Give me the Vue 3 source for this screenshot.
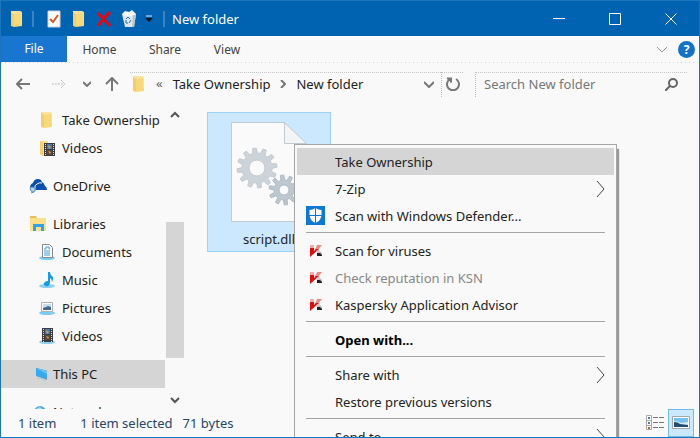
<script setup>
import { ref } from 'vue';

const search = ref('');

const tabs = ['Home', 'Share', 'View'];

const groups = [
  [
    { icon: 'folder', label: 'Take Ownership', child: true },
    { icon: 'folder-video', label: 'Videos', child: true },
  ],
  [{ icon: 'onedrive', label: 'OneDrive' }],
  [
    { icon: 'libraries', label: 'Libraries' },
    { icon: 'documents', label: 'Documents', child: true },
    { icon: 'music', label: 'Music', child: true },
    { icon: 'pictures', label: 'Pictures', child: true },
    { icon: 'film', label: 'Videos', child: true },
  ],
  [{ icon: 'pc', label: 'This PC', active: true }],
  [{ icon: 'network', label: 'Network' }],
];

const menu = [
  [
    { label: 'Take Ownership', active: true },
    { label: '7-Zip', sub: true },
    { label: 'Scan with Windows Defender...', icon: 'defender' },
  ],
  [
    { label: 'Scan for viruses', icon: 'kaspersky' },
    { label: 'Check reputation in KSN', icon: 'kaspersky', disabled: true },
    { label: 'Kaspersky Application Advisor', icon: 'kaspersky' },
  ],
  [{ label: 'Open with...', bold: true }],
  [{ label: 'Share with', sub: true }, { label: 'Restore previous versions' }],
  [{ label: 'Send to', sub: true }],
];

// outline of a gear with a round hole in the middle
const gear = (cx, cy, outer, inner, hole, teeth) => {
  const step = (Math.PI * 2) / teeth;
  const points = [];
  for (let i = 0; i < teeth; i++) {
    const offsets = [[-0.3, inner], [-0.17, outer], [0.17, outer], [0.3, inner]];
    for (const [o, r] of offsets) {
      const a = (i + o) * step - 1.7;
      points.push(`${(cx + Math.cos(a) * r).toFixed(1)} ${(cy + Math.sin(a) * r).toFixed(1)}`);
    }
  }
  return `M${points.join('L')}Z M${cx - hole} ${cy}a${hole} ${hole} 0 1 0 ${hole * 2} 0a${hole} ${hole} 0 1 0 ${-hole * 2} 0Z`;
};
const bigGear = gear(26, 46, 20, 15, 8, 12);
const smallGear = gear(53, 68, 15, 10, 5, 10);
</script>

<template>
  <svg class="sprite" aria-hidden="true">
    <symbol id="folder" viewBox="0 0 18 18">
      <path d="M3 1h9l2 1v14H3z" fill="#fbe39a" />
      <path d="M3 2l3 2v13l-3-1z" fill="#f3cf6b" />
      <path d="M6 4l7-1v9l1 1v3l-8 1z" fill="#f8d879" />
    </symbol>
    <symbol id="folder-video" viewBox="0 0 18 18">
      <path d="M2 2h8v14l-5 1-3-2z" fill="#f9dd88" />
      <path d="M2 2l3 2v13l-3-2z" fill="#f3cf6b" />
      <path d="M6 4h11v13H6z" fill="#3b3b40" />
      <path d="M9 5h5v5H9z" fill="#377fc4" />
      <path d="M9 11h5v5H9z" fill="#5a4a35" />
      <path d="M10 6l3 2-2 2zM10 12l3 1-1 2z" fill="#e79a35" />
      <path d="M7.500 5v12M15.500 5v12" stroke="#ddd" stroke-dasharray="1 1" />
    </symbol>
    <symbol id="onedrive" viewBox="0 0 18 18">
      <path d="M1 11q0-4 3-5 1-4 5-4 3 0 4 3 2 1 3 4 2 1 2 4H7q-2-2-4-1z" fill="#0a4fb0" />
      <path d="M6 12q-1-4 2-5 3-2 5-1" fill="none" stroke="#f9f9f9" />
      <path d="M1 11l2-1 3 1v3l-2 1-2-1zM2 16l3-1" fill="#b9d3ee" stroke="#5a90c8" />
    </symbol>
    <symbol id="libraries" viewBox="0 0 18 18">
      <path d="M1 1h6l1 2h9v13H1z" fill="#fbe08c" />
      <path d="M1 1h6l1 2H1z" fill="#e9bf57" />
      <path d="M4 9h11v7h-3v-4H7v4H4z" fill="#2fa3e6" />
    </symbol>
    <symbol id="documents" viewBox="0 0 18 18">
      <ellipse cx="9" cy="15" rx="8" ry="2" fill="#7ccbf0" />
      <path d="M4.500 1.500h7l3 3v10h-10z" fill="#fff" stroke="#888" />
      <path d="M6 6h2V4h3v2h1M6 8h6M6 10h6M6 12h6" fill="none" stroke="#3c9ae0" />
    </symbol>
    <symbol id="music" viewBox="0 0 18 18">
      <ellipse cx="9" cy="15" rx="8" ry="2" fill="#8ad0f0" />
      <path d="M10 1h2q0 3 3 5 1 2-1 5 0-3-2-4v5q-1 4-4 3-3-1-2-3 1-2 4-2z" fill="#149be9" />
    </symbol>
    <symbol id="pictures" viewBox="0 0 18 18">
      <ellipse cx="9" cy="14" rx="8" ry="2" fill="#7ccbf0" />
      <path d="M3.500 3.500h11v9h-11z" fill="#fff" stroke="#aab3ba" />
      <path d="M5 5h8v6H5z" fill="#c5dff0" />
      <path d="M5 9l3-1 2-1 3 1v3H5z" fill="#446b8c" />
    </symbol>
    <symbol id="film" viewBox="0 0 18 18">
      <ellipse cx="9" cy="15" rx="8" ry="2" fill="#8ad0f0" />
      <path d="M4 1h11v14H4z" fill="#3b3b40" />
      <path d="M7 2h5v5H7z" fill="#377fc4" />
      <path d="M7 8h5v5H7z" fill="#5a4a35" />
      <path d="M8 3l3 2-2 2zM8 9l3 1-1 2z" fill="#e79a35" />
      <path d="M5.500 2v13M13.500 2v13" stroke="#ddd" stroke-dasharray="1 1" />
    </symbol>
    <symbol id="pc" viewBox="0 0 18 18">
      <path d="M7 3l12 3v9L8 11z" fill="#6d7f8d" />
      <path d="M7 3l11 3v8L7 11z" fill="#35aaf0" />
      <path d="M7 3l11 3v3z" fill="#6cc6f8" />
      <path d="M8 14l4-1 4 3" fill="none" stroke="#9ecbe6" />
    </symbol>
    <symbol id="network" viewBox="0 0 18 18">
      <circle cx="11" cy="9" r="6" fill="#5aa6dc" />
      <path d="M7 6l4-2 3 3-4 2z" fill="#a8dbf5" />
      <path d="M1 8h6v6H1z" fill="#3f87c4" />
    </symbol>
    <symbol id="defender" viewBox="0 0 19 19">
      <path d="M0 0h19v19H0z" fill="#0f78d4" />
      <path d="M9.500 2q3 2 6 2v5q0 5-6 8-6-3-6-8V4q3 0 6-2z" fill="#fff" />
      <path d="M9.500 2v15M3 9.500h13" stroke="#0f78d4" />
    </symbol>
    <symbol id="kaspersky" viewBox="0 0 19 19">
      <path d="M4 4h4v5H4z" fill="#f4aaa6" />
      <path d="M11 4h5l-4 5H9z" fill="#f08984" />
      <path d="M4 7h4v3l2-2h3L4 16z" fill="#e30b0b" />
      <path d="M10 10l3-1 3 3v3h-3z" fill="#c4c4c4" />
      <path d="M11 12h3l2 2v1h-5z" fill="#222" />
    </symbol>
  </svg>

  <div class="window">
    <header class="titlebar">
      <svg class="icon"><use href="#folder" /></svg>
      <span class="divider"></span>
      <button class="quick" aria-label="Properties">
        <svg viewBox="0 0 18 18">
          <path d="M3 1h12v16H3z" fill="#fdfdfd" />
          <path d="M3 1h12v16H3z" fill="none" stroke="#c9d2da" />
          <path d="M5 9l3 3 5-7" fill="none" stroke="#e8501c" stroke-width="2" />
        </svg>
      </button>
      <button class="quick" aria-label="New folder"><svg><use href="#folder" /></svg></button>
      <button class="quick" aria-label="Delete">
        <svg viewBox="0 0 18 18">
          <path d="M3 3l12 13M15 2Q8 8 3 16" fill="none" stroke="#e30613" stroke-width="3" />
        </svg>
      </button>
      <button class="quick" aria-label="Recycle Bin">
        <svg viewBox="0 0 18 18">
          <path d="M2 4h14l-2 13H5z" fill="#dfe7ec" />
          <path d="M2 4l3-3 4 1 3-2 4 4-4 2H5z" fill="#f7f9fa" />
          <path d="M13 5h3l-2 12h-2z" fill="#b8c5ce" />
          <path d="M6 9l2-2 2 2M6 10v3h2M9 13l2-3" fill="none" stroke="#1878c8" />
        </svg>
      </button>
      <button class="customize" aria-label="Customize Quick Access Toolbar">
        <svg viewBox="0 0 8 8"><path d="M1 1h6" stroke="#dde8f2" /><path d="M0 3h8L4 7z" fill="#0b1620" /></svg>
      </button>
      <span class="divider"></span>
      <h1>New folder</h1>
      <div class="controls">
        <button aria-label="Minimize"><svg viewBox="0 0 12 12"><path d="M0 5.500h12" /></svg></button>
        <button aria-label="Maximize"><svg viewBox="0 0 12 12"><path d="M.5.500h11v11H.5z" /></svg></button>
        <button aria-label="Close"><svg viewBox="0 0 12 12"><path d="M.5.500l11 11M11.500.500l-11 11" /></svg></button>
      </div>
    </header>

    <nav class="tabs">
      <button class="file">File</button>
      <button v-for="tab in tabs" :key="tab" class="tab">{{ tab }}</button>
      <button class="expand" aria-label="Expand the Ribbon">
        <svg viewBox="0 0 12 8"><path d="M1 1l5 5 5-5" /></svg>
      </button>
      <button class="help" aria-label="Help">?</button>
    </nav>

    <div class="toolbar">
      <button class="arrow" aria-label="Back">
        <svg viewBox="0 0 14 14"><path d="M14 7H1M6 2L1 7l5 5" stroke="#777" stroke-width="2" /></svg>
      </button>
      <button class="arrow forward" aria-label="Forward" disabled>
        <svg viewBox="0 0 14 14"><path d="M0 7h12M9 3l4 4-4 4" stroke="#bbb" stroke-dasharray="2 1" /></svg>
      </button>
      <button class="recent" aria-label="Recent locations">
        <svg viewBox="0 0 8 6"><path d="M0 1l4 4 4-4" stroke="#777" stroke-width="2" /></svg>
      </button>
      <button class="arrow" aria-label="Up">
        <svg viewBox="0 0 14 14"><path d="M7 14V1M1 7l6-6 6 6" stroke="#777" stroke-width="2" /></svg>
      </button>
      <div class="address">
        <svg class="icon"><use href="#folder" /></svg>
        <span class="more">«</span>
        <a href="#">Take Ownership</a>
        <svg class="crumb" viewBox="0 0 6 8"><path d="M1 0l4 4-4 4" stroke="#777" stroke-width="2" /></svg>
        <a href="#">New folder</a>
        <button class="history" aria-label="Previous locations">
          <svg viewBox="0 0 10 7"><path d="M0 1l5 5 5-5" stroke="#777" stroke-width="2" /></svg>
        </button>
        <button class="refresh" aria-label="Refresh">
          <svg viewBox="0 0 14 14"><path d="M10 2a6 6 0 1 1-6 0M1 1.500h4v4" stroke="#777" stroke-width="2" /></svg>
        </button>
      </div>
      <label class="search">
        <input v-model="search" type="text" placeholder="Search New folder" aria-label="Search New folder" />
        <svg viewBox="0 0 13 13"><circle cx="8" cy="5" r="4" /><path d="M5 8l-5 5" /></svg>
      </label>
    </div>

    <main class="body">
      <aside class="sidebar">
        <ul class="tree">
          <template v-for="(group, g) in groups" :key="g">
            <li v-for="(item, i) in group" :key="item.label" :class="{ first: i === 0 && g > 0 }">
              <a href="#" :class="{ child: item.child, active: item.active }">
                <svg class="icon"><use :href="'#' + item.icon" /></svg>{{ item.label }}
              </a>
            </li>
          </template>
        </ul>
        <div class="scrollbar">
          <button aria-label="Scroll up"><svg viewBox="0 0 10 8"><path d="M1 6l4-4 4 4" /></svg></button>
          <div class="track"><div class="thumb"></div></div>
          <button aria-label="Scroll down"><svg viewBox="0 0 10 8"><path d="M1 2l4 4 4-4" /></svg></button>
        </div>
      </aside>
      <section class="files">
        <figure class="item">
          <svg viewBox="0 0 76 100">
            <path d="M.5.500h53l22 22v77H.5z" fill="#fafafa" stroke="#c3c9cd" />
            <path d="M53.500.500v21h22z" fill="#f3f4f5" stroke="#c3c9cd" />
            <path :d="bigGear" fill="#cdd4d9" stroke="#c3cad0" fill-rule="evenodd" />
            <path :d="smallGear" fill="#bcc7cf" stroke="#b0bac2" fill-rule="evenodd" />
          </svg>
          <figcaption>script.dll</figcaption>
        </figure>
      </section>
    </main>

    <footer class="status">
      <span>1 item</span>
      <span class="selected">1 item selected</span>
      <span>71 bytes</span>
      <div class="views">
        <button aria-label="Details view">
          <svg viewBox="0 0 18 16">
            <path d="M.5.500h5v14h-5zM.5 5.500h5M.5 10.500h5" fill="#fff" stroke="#aaa" />
            <path d="M2 3h2M2 8h2" stroke="#4a7db0" stroke-width="2" />
            <path d="M2 13h2" stroke="#b5672a" stroke-width="2" />
            <path d="M7 2.500h11M7 7.500h11M7 12.500h11" stroke="#777" stroke-dasharray="5 1" />
          </svg>
        </button>
        <button class="on" aria-label="Large thumbnails view">
          <svg viewBox="0 0 18 16">
            <path d="M.5 1.500h17v12H.5z" fill="#fff" stroke="#a0a8ae" />
            <path d="M2 3h14v9H2z" fill="#79c0f0" />
            <path d="M2 6q4 0 7 2l7-1v3H2z" fill="#d5ecfa" />
            <path d="M2 7q4 0 6 2l8 1v2H2z" fill="#234d70" />
          </svg>
        </button>
      </div>
    </footer>

    <div class="menu" role="menu">
      <div v-for="(group, g) in menu" :key="g" class="section">
        <button
          v-for="item in group"
          :key="item.label"
          role="menuitem"
          :disabled="item.disabled"
          :class="{ active: item.active, bold: item.bold }"
        >
          <span class="slot"><svg v-if="item.icon"><use :href="'#' + item.icon" /></svg></span>
          {{ item.label }}
          <svg v-if="item.sub" class="sub" viewBox="0 0 9 16"><path d="M1 0l7 8-7 8" /></svg>
        </button>
      </div>
    </div>
  </div>
</template>

<style>
body {
  margin: 0;
  overflow: hidden;
}
</style>

<style scoped>
* {
  box-sizing: border-box;
}

.sprite {
  position: absolute;
  width: 0;
  height: 0;
}

.window {
  position: relative;
  display: flex;
  flex-direction: column;
  height: 100vh;
  overflow: hidden;
  border: 1px solid #1c74bb;
  background-color: #f9f9f9;
  color: #222;
  font-family: "Noto Sans", "Open Sans", sans-serif;
  font-size: 13px;
  line-height: 18px;
}

button {
  display: flex;
  align-items: center;
  justify-content: center;
  padding: 0;
  border: 0;
  background: none;
  color: inherit;
  font: inherit;
}

a {
  color: inherit;
  text-decoration: none;
  white-space: nowrap;
}

svg {
  display: block;
  flex: none;
}

.icon {
  width: 18px;
  height: 18px;
}

.titlebar {
  display: flex;
  align-items: center;
  flex: none;
  height: 35px;
  padding-left: 7px;
  background-color: #0063b1;
  color: #fff;
}

.titlebar h1 {
  margin: 0;
  font-size: 13px;
  font-weight: 400;
}

.divider {
  width: 2px;
  height: 16px;
  margin: 0 7px 0 6px;
  background-color: #3f83bd;
}

.quick {
  width: 25px;
  height: 25px;
}

.quick svg {
  width: 18px;
  height: 18px;
}

.customize {
  width: 16px;
  height: 25px;
}

.customize svg {
  width: 8px;
  height: 8px;
}

.controls {
  display: flex;
  margin-left: auto;
}

.controls button {
  width: 56px;
  height: 35px;
}

.controls svg {
  width: 12px;
  height: 12px;
  fill: none;
  stroke: #fff;
}

.tabs {
  display: flex;
  align-items: center;
  flex: none;
  height: 27px;
  padding-right: 4px;
  background: repeating-linear-gradient(90deg, #c3d2de 0 1px, transparent 1px 4px) bottom / 100% 1px no-repeat;
  color: #444;
  font-size: 12px;
}

.file {
  width: 66px;
  height: 26px;
  align-self: flex-start;
  background-color: #1976d0;
  color: #fff;
}

.tab {
  width: 62px;
  height: 26px;
}

.tab:nth-child(2) {
  width: 65px;
}

.tab:nth-child(3) {
  width: 66px;
}

.tab:nth-child(4) {
  width: 58px;
}

.expand {
  width: 22px;
  height: 26px;
  margin: 0 5px 0 auto;
}

.expand svg {
  width: 12px;
  height: 8px;
  fill: none;
  stroke: #999;
}

.help {
  width: 17px;
  height: 17px;
  border-radius: 50%;
  background-color: #1473c8;
  color: #fff;
  font-weight: 700;
}

.toolbar {
  display: flex;
  align-items: center;
  flex: none;
  height: 42px;
  padding: 0 11px 0 15px;
}

.toolbar svg {
  fill: none;
}

.arrow {
  width: 14px;
  height: 24px;
}

.arrow svg {
  width: 14px;
  height: 14px;
}

.forward {
  margin-left: 22px;
}

.recent {
  width: 8px;
  height: 24px;
  margin: 0 14px 0 17px;
}

.recent svg {
  width: 8px;
  height: 6px;
}

.address,
.search {
  display: flex;
  align-items: center;
  height: 25px;
  background: repeating-linear-gradient(90deg, #c4c4c4 0 1px, transparent 1px 2px) top / 100% 1px no-repeat;
}

.address {
  flex: 1;
  margin: 0 11px;
}

.more {
  margin: 0 10px 2px 8px;
  color: #666;
}

.crumb {
  width: 6px;
  height: 8px;
  margin: 0 10px;
}

.history {
  width: 24px;
  height: 25px;
  margin-left: auto;
}

.history svg {
  width: 10px;
  height: 7px;
}

.refresh {
  width: 23px;
  height: 25px;
  border-left: 1px dotted #bbb;
}

.refresh svg {
  width: 14px;
  height: 14px;
}

.search {
  width: 32%;
  max-width: 213px;
  padding: 0 10px 0 8px;
  border-left: 1px dotted #bbb;
}

.search input {
  flex: 1;
  min-width: 0;
  padding: 0;
  border: 0;
  outline: 0;
  background: none;
  color: #222;
  font: inherit;
}

.search input::placeholder {
  color: #777;
  opacity: 1;
}

.search svg {
  width: 13px;
  height: 13px;
  stroke: #666;
  stroke-width: 2;
}

.body {
  display: flex;
  flex: 1;
  min-height: 0;
}

.sidebar {
  display: flex;
  flex: none;
  width: 183px;
}

.tree {
  flex: 1;
  margin: 0;
  padding: 1px 0 0;
  overflow: hidden;
  list-style: none;
}

.tree a {
  display: flex;
  align-items: center;
  gap: 6px;
  height: 28px;
  padding-left: 28px;
}

.tree a.child {
  padding-left: 37px;
}

.tree a.active {
  background-color: #d5d5d5;
}

.tree .first {
  margin-top: 10px;
}

.scrollbar {
  display: flex;
  flex-direction: column;
  width: 18px;
  margin-left: 1px;
}

.scrollbar button {
  width: 18px;
  height: 19px;
}

.scrollbar svg {
  width: 10px;
  height: 8px;
  fill: none;
  stroke: #555;
  stroke-width: 2;
}

.track {
  display: flex;
  flex: 1;
  flex-direction: column;
  justify-content: flex-end;
  padding-bottom: 32px;
}

.thumb {
  height: 58%;
  background-color: #d5d5d5;
}

.files {
  flex: 1;
  padding: 7px 23px;
}

.item {
  display: flex;
  flex-direction: column;
  align-items: center;
  width: 124px;
  height: 140px;
  margin: 0;
  padding-top: 9px;
  border: 1px solid #99d1f8;
  background-color: #cce8ff;
}

.item svg {
  width: 76px;
  height: 100px;
}

.item figcaption {
  margin-top: 8px;
}

.status {
  display: flex;
  align-items: center;
  flex: none;
  height: 28px;
  padding: 0 5px 0 17px;
  color: #26466b;
}

.selected {
  margin: 0 10px 0 24px;
}

.views {
  display: flex;
  align-self: stretch;
  margin-left: auto;
}

.views button {
  width: 26px;
}

.views .on {
  border: 1px solid #6fbdf0;
  background-color: #cce8ff;
}

.views svg {
  width: 18px;
  height: 16px;
}

.menu {
  position: absolute;
  top: 143px;
  left: 293px;
  width: 323px;
  padding: 3px 2px;
  border: 1px solid #a5a5a5;
  background-color: #f9f9f9;
  box-shadow: 2px 5px 1px #999;
}

.section + .section::before {
  content: "";
  display: block;
  height: 1px;
  margin: 3px 9px 4px;
  background-color: #a5a5a5;
}

.menu button {
  width: 100%;
  height: 27px;
  justify-content: flex-start;
  padding: 0 9px;
}

.menu button.active {
  background-color: #d5d5d5;
}

.menu button.bold {
  color: #000;
  font-weight: 700;
}

.menu button:disabled {
  color: #888;
}

.slot {
  width: 29px;
}

.slot svg {
  width: 19px;
  height: 19px;
}

.sub {
  width: 9px;
  height: 16px;
  margin-left: auto;
  fill: none;
  stroke: #444;
}
</style>
